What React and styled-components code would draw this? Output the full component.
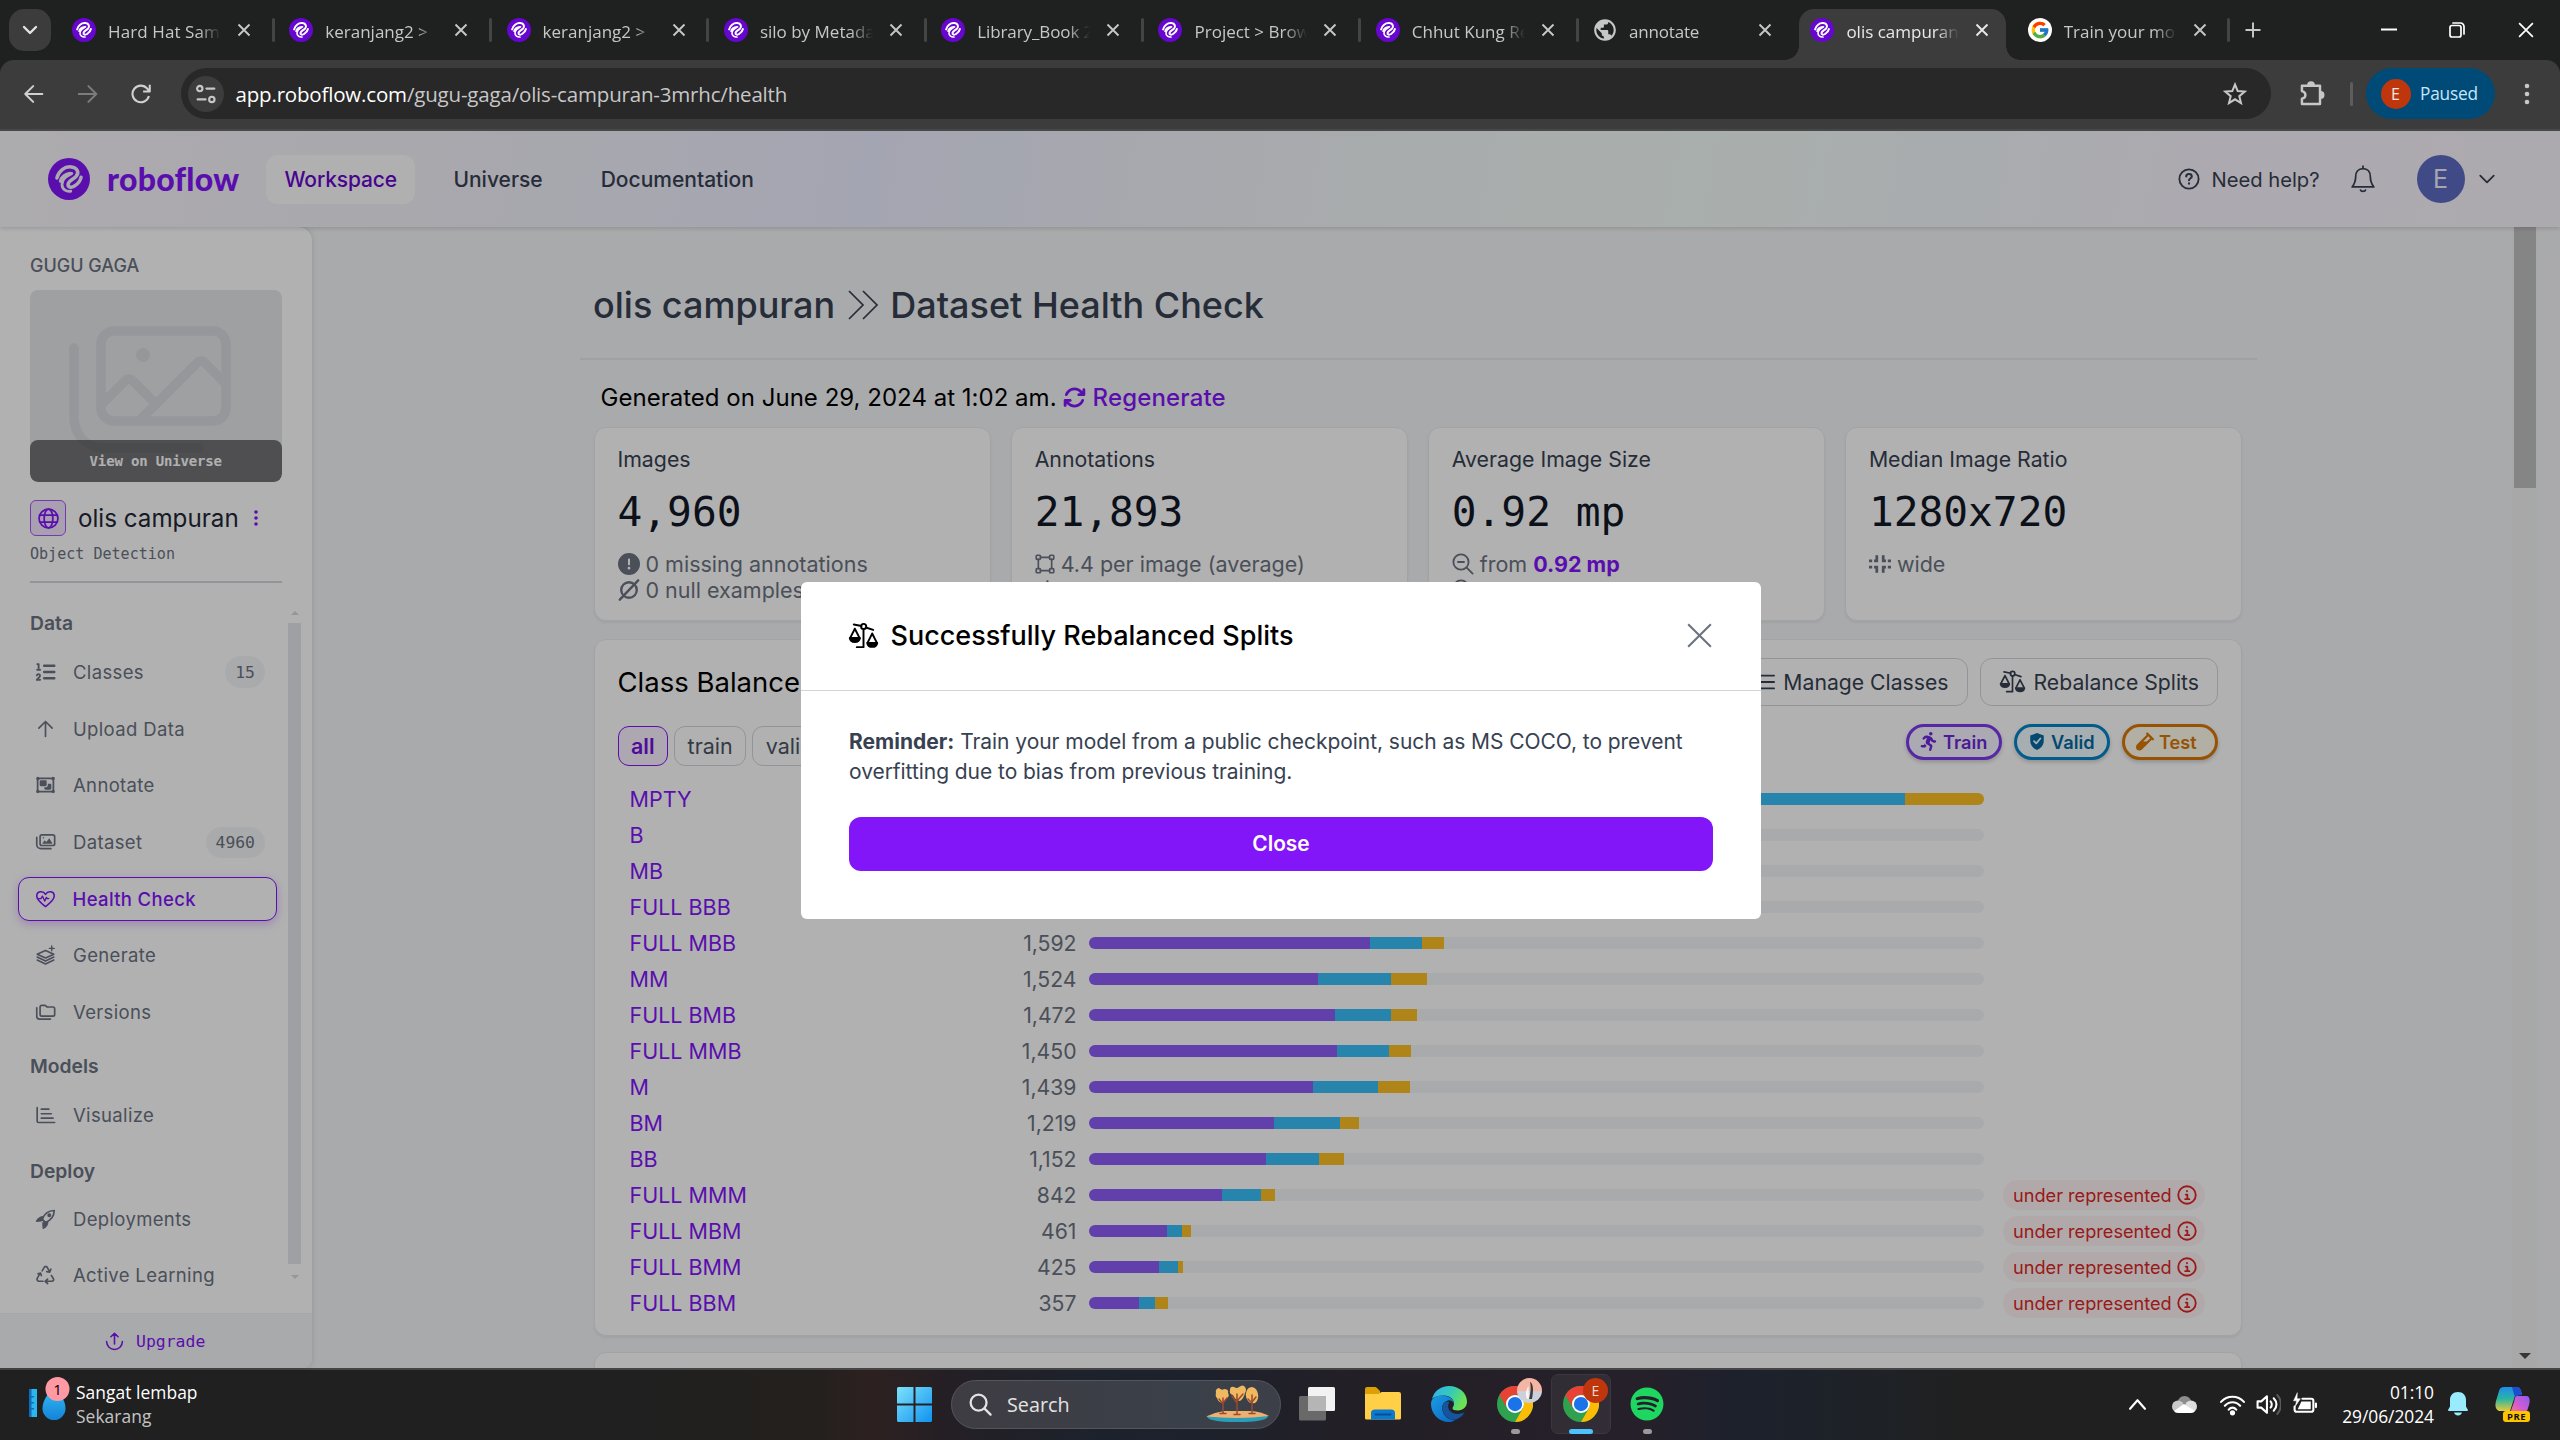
import React from 'react';
import styled, { createGlobalStyle, css } from 'styled-components';
import {
  FaListOl, FaArrowsRotate, FaCircleExclamation, FaPersonRunning, FaVial, FaRegObjectGroup, FaSpotify,
} from 'react-icons/fa6';
import { FcGoogle } from 'react-icons/fc';
import { MdPublic } from 'react-icons/md';

const Global = createGlobalStyle`
  * { box-sizing: border-box; }
  body { margin: 0; background: #1f2120; }
  svg { display: block; flex: none; }
`;

const inter = 'Inter, "Liberation Sans", sans-serif';
const segoe = '"Open Sans", "Noto Sans", sans-serif';
const mono = '"DejaVu Sans Mono", "Liberation Mono", monospace';
const purple = '#8315f9';

const Screen = styled.div`
  width: 2560px;
  height: 1440px;
  display: flex;
  flex-direction: column;
  overflow: hidden;
  white-space: nowrap;
  font-family: ${inter};
`;

/* ---------- icons ---------- */
const Svg = ({ s = 24, sw = 2, vb = 24, children, ...p }) => (
  <svg width={s} height={s} viewBox={`0 0 ${vb} ${vb}`} fill="none" stroke="currentColor" strokeWidth={sw}
    strokeLinecap="round" strokeLinejoin="round" {...p}>{children}</svg>
);
const Close = ({ s = 16, sw = 2 }) => <Svg s={s} vb={16} sw={sw} strokeLinecap="butt"><path d="M2.5 2.5l11 11M13.5 2.5l-11 11" /></Svg>;

const Mark = ({ s, color, line }) => (
  <svg width={s} height={s} viewBox="0 0 24 24" fill="none">
    <circle cx="12" cy="12" r="12" fill={color} />
    <path d="M5.1 11.4C6 7.6 9.5 4.7 13.3 5.1c3.6.4 4.8 3.4 2.6 5.6-1.6 1.6-4 2.2-4.4 4.2-.3 1.8 1.7 2.3 3.6 1.1 1.9-1.1 3.4-2.9 3.8-5"
      stroke={line} strokeWidth="2" strokeLinecap="round" />
    <path d="M12.6 8.7c-2.6.2-5.4 2.3-5.6 4.6M13.6 8.8c-3 1.6-5.6 3-5.6 6.4 0 2.6 2.4 4.2 5 3.8" stroke={line} strokeWidth="1.6" strokeLinecap="round" />
  </svg>
);

const Scale = ({ s = 30, sw = 1.5 }) => (
  <Svg s={s} sw={sw}>
    <path d="M4.5 3.5l6 1.2M13.8 5.8l5.7 1.9M12 7.2V21H6.8" />
    <circle cx="12.1" cy="5" r="2" />
    <path d="M5.3 6.8L1.6 14M5.3 6.8L9 14M18.7 10.5L15.2 17.5M18.7 10.5l3.6 7" />
    <path d="M1.4 14h7.8c-.3 2-1.9 3-3.9 3s-3.6-1-3.9-3zM14.9 17.800h7.700c-.3 2-1.900 3-3.850 3s-3.550-1-3.850-3z" fill="currentColor" />
  </Svg>
);
const Info = ({ s = 19 }) => <Svg s={s} sw={2.2}><circle cx="12" cy="12" r="10.500" /><path d="M12 7v.6M10.500 11.500H12.400V16.800M9.800 17h5" /></Svg>;
const Chevron = ({ s = 16, sw = 2, up }) => <Svg s={s} sw={sw} vb={16}><path d={up ? 'M1 12l7-8 7 8' : 'M2 5l6 6 6-6'} /></Svg>;
const Kebab = ({ s = 20, r = 2.2, far = 9 }) => <svg width={s} height={s} viewBox="0 0 24 24" fill="currentColor"><circle cx="12" cy={12 - far} r={r} /><circle cx="12" cy="12" r={r} /><circle cx="12" cy={12 + far} r={r} /></svg>;
const ListIcon = ({ s = 24 }) => <Svg s={s} sw={2}><path d="M8 5h15M8 12h15M8 19h15M2 5h1M2 12h1M2 19h1" /></Svg>;
const Globe = ({ s = 21, sw = 2 }) => <Svg s={s} sw={sw}><circle cx="12" cy="12" r="10.800" /><ellipse cx="12" cy="12" rx="5" ry="10.800" /><path d="M2 8h20M2 16h20" /></Svg>;
const Pictures = ({ s, sw = 2 }) => (
  <Svg s={s} sw={sw}>
    <rect x="5.500" y="3.500" width="17.500" height="12.700" rx="2.200" />
    <path d="M1.500 6.500v8.500a5 5 0 0 0 5 5h12" />
    <path d="M8 14l3-4 2 2 3.500-4.500L20.500 14z" fill="currentColor" stroke="none" />
    <circle cx="9.500" cy="7" r=".9" fill="currentColor" stroke="none" />
  </Svg>
);
const Folders = ({ s }) => <Svg s={s} sw={2}><path d="M5.500 6a2 2 0 0 1 2-2h4l2.500 2H21a2 2 0 0 1 2 2v7a2 2 0 0 1-2 2H7.500a2 2 0 0 1-2-2zM1.500 7v10a3.500 3.500 0 0 0 3.500 3.500h13" /></Svg>;
const Heart = ({ s }) => <Svg s={s} sw={1.9}><path d="M12 21C8 18 1.500 13.500 1.500 8.500 1.500 2.500 9 1.500 12 6.500c3-5 10.500-4 10.500 2 0 5-6.500 9.500-10.500 12.500z" /><path d="M2 11.500h4.500l1.800-3 2.700 6 2.200-4.500 1 1.500H16" strokeWidth="1.600" /></Svg>;
const Layers = ({ s }) => <Svg s={s} sw={1.9}><path d="M12 6.500L2 11l10 4.600L22 11zM2 14.500l10 4.800 10-4.800M2 18l10 4.800L22 18" /><path d="M19.500 1v6M16.500 4h6" strokeWidth="1.700" /></Svg>;
const BarIcon = ({ s }) => <Svg s={s} sw={2}><path d="M2 3v16.500a1.500 1.500 0 0 0 1.500 1.500H23M7 5h9M7 10.500h12M7 15.800h14" /></Svg>;
const Rocket = ({ s }) => <Svg s={s} sw={2}><path d="M8 12.500C10.500 5.500 15.500 2 22.500 1.800 22.300 9 18.500 13.500 12 16.200z" /><circle cx="16.500" cy="7.500" r="1.400" fill="currentColor" /><path d="M9 9.500c-4 0-5.500 2-7.500 5l5.500-.5zM14.500 15.500c0 4-2 5.500-5 7.500l-.5-6z" fill="currentColor" /><path d="M8 12.500l4 4" /></Svg>;
const Recycle = ({ s }) => <Svg s={s} sw={2}><path d="M8 7l3-5h2.500L17 8M13.500 8L17 8.500 18.500 5M5.500 10L2 16c-.6 1.500.5 3.500 2 3.500h5M3 10.500l3-.8 1 3M19 12.500l2.500 4c.8 1.500-.3 3-2 3H12M14.500 17l-3 2.600 3 2.600" /></Svg>;
const Up = ({ s }) => <Svg s={s} sw={2}><path d="M12 21V3M4 11l8-8 8 8" /></Svg>;
const Upgrade = ({ s }) => <Svg s={s} sw={2}><path d="M12 15V2M7.500 6L12 1.800 16.500 6M2 12c.2 6 4.500 10 10 10s9.800-4 10-10" /></Svg>;
const Shield = ({ s }) => <Svg s={s} sw={2.400}><path d="M12 .8l9 3.200v7c0 6-4 10.200-9 12.200C7 21.200 3 17 3 11V4z" fill="currentColor" stroke="none" /><path d="M8 11.500l3 3 5.500-6.500" stroke="#f0f9ff" /></Svg>;
const Zoom = ({ s }) => <Svg s={s} sw={2}><circle cx="9.800" cy="9.800" r="8.300" /><path d="M16 16l6.500 6.500M6.500 9.800h6.600" /></Svg>;
const Null = ({ s }) => <Svg s={s} sw={2.600}><circle cx="12" cy="12" r="8.500" /><path d="M2 22.500L22 1.500" /></Svg>;
const Slash = ({ s }) => <Svg s={s} sw={2.400}><path d="M6 22L15 1.500M1 8h21M2 16h19" /></Svg>;
const Vector = ({ s }) => <Svg s={s} sw={2}><path d="M6.500 4h11M6.500 20h11M4 6.500v11M20 6.500v11" /><rect x="1.500" y="1.500" width="5" height="5" rx="1" /><rect x="17.500" y="1.500" width="5" height="5" rx="1" /><rect x="1.500" y="17.500" width="5" height="5" rx="1" /><rect x="17.500" y="17.500" width="5" height="5" rx="1" /></Svg>;
const Compress = ({ s }) => <Svg s={s} sw={3} strokeLinejoin="miter" strokeLinecap="butt"><path d="M0 8.500h3.500M5.500 8.500h3V2.500M24 8.500h-3.500M18.500 8.500h-3V2.500M0 15.500h3.500M5.500 15.500h3v6M24 15.500h-3.500M18.500 15.500h-3v6" /></Svg>;

/* ---------- browser ---------- */
const TabStrip = styled.div`
  height: 60px;
  flex: none;
  display: flex;
  align-items: flex-start;
  padding: 9px 0 0 9px;
  background: #1f2120;
`;
const TabSearch = styled.div`
  width: 42px;
  height: 42px;
  margin-right: 6.500px;
  border-radius: 15px;
  background: #3c3c3c;
  color: #e3e3e3;
  display: grid;
  place-items: center;
`;
const Tab = styled.div`
  position: relative;
  width: 217.300px;
  height: 51px;
  flex: none;
  display: flex;
  align-items: center;
  padding: 0 0 9px 14.500px;
  color: ${(p) => (p.$active ? '#e8e8e8' : '#c7c7c7')};
  font: 400 17px ${segoe};
  &::after {
    content: '';
    width: 3px;
    height: 24px;
    margin-left: auto;
    border-radius: 2px;
    background: ${(p) => (p.$sep ? '#444' : 'transparent')};
  }
  ${(p) => p.$active && css`
    z-index: 0;
    &::before {
      content: '';
      position: absolute;
      z-index: -1;
      inset: 0 7px 0 3px;
      border-radius: 15px 15px 0 0;
      background: #3c3c3c;
    }
  `}
`;
const Flare = styled.i`
  position: absolute;
  bottom: 0;
  width: 14px;
  height: 14px;
  ${(p) => (p.$right ? 'right: -7px;' : 'left: -11px;')}
  background: radial-gradient(circle at ${(p) => (p.$right ? '100%' : '0')} 0, transparent 13.500px, #3c3c3c 14px);
`;
const TabTitle = styled.span`
  width: 113px;
  margin: 3px 15px 0 12px;
  overflow: hidden;
  letter-spacing: ${(p) => p.$ls || 0}px;
  mask-image: linear-gradient(90deg, #000 80%, transparent 100%);
`;
const GoogleDisc = styled.span`
  width: 24px;
  height: 24px;
  border-radius: 50%;
  background: #fff;
  display: grid;
  place-items: center;
`;
const SiteGlobe = styled(MdPublic)`
  width: 26px;
  height: 26px;
  margin: 0 -1px;
  color: #c4c7c5;
`;
const NewTab = styled.div`
  width: 46px;
  height: 42px;
  display: grid;
  place-items: center;
  color: #c7c7c7;
`;
const WindowButtons = styled.div`
  margin-left: auto;
  height: 42px;
  display: flex;
  align-items: center;
  gap: 51.500px;
  padding-right: 24px;
  color: #fff;
`;
const Toolbar = styled.div`
  height: 71px;
  flex: none;
  display: flex;
  align-items: center;
  padding: 0 18px 2px 24px;
  background: #3c3c3c;
  border-bottom: 2.500px solid #484a49;
  border-radius: 14px 14px 0 0;
  color: #c7c7c7;
`;
const NavIcon = styled.span`
  width: 20px;
  margin-right: 33.500px;
  color: ${(p) => (p.$dim ? '#7c7c7c' : '#d0d0d0')};
`;
const Omnibox = styled.div`
  width: 2090px;
  height: 51px;
  border-radius: 26px;
  background: #282828;
  display: flex;
  align-items: center;
  padding: 0 24px 0 7.500px;
  margin: 0 28px 0 -4px;
  color: #c7c7c7;
  font: 400 20.500px ${segoe};
  letter-spacing: -0.18px;
  b { font-weight: 400; color: #fff; }
  > svg { margin-left: auto; }
`;
const SiteInfo = styled.span`
  width: 36px;
  height: 36px;
  margin-right: 11.500px;
  border-radius: 50%;
  background: #3c3c3c;
  display: grid;
  place-items: center;
`;
const Paused = styled.div`
  width: 129px;
  height: 51px;
  margin-right: 20px;
  border-radius: 26px;
  background: #004a77;
  display: flex;
  align-items: center;
  gap: 9.500px;
  padding-left: 15px;
  color: #c2e7ff;
  font: 400 17.300px ${segoe};
  letter-spacing: -0.2px;
`;
const Initial = styled.span`
  width: 30px;
  height: 30px;
  border-radius: 50%;
  display: grid;
  place-items: center;
  background: #bf360c;
  color: #f4e6e0;
  font-size: 16px;
  letter-spacing: 0;
`;
const ToolDivider = styled.i`
  width: 3px;
  height: 24px;
  border-radius: 2px;
  background: #5c5e5e;
  margin: 0 13px 0 23px;
`;

/* ---------- page ---------- */
const Page = styled.div`
  position: relative;
  flex: 1;
  min-height: 0;
  display: flex;
  flex-direction: column;
  background: #f3f4f6;
`;
const Header = styled.header`
  position: relative;
  z-index: 1;
  height: 96px;
  flex: none;
  display: flex;
  align-items: center;
  padding: 0 64.500px 0 48px;
  background: linear-gradient(100deg, #f7f5f9 0%, #f2f1f8 17%, #ebedff 34%, #f1f3f8 48%, #f2fbf7 66%, #f3f6fb 77%, #f8f3fc 90%, #f8f4fb 100%);
  box-shadow: 0 2px 4px rgba(0, 0, 0, 0.13);
  color: #374151;
  font-size: 21px;
`;
const Wordmark = styled.span`
  width: 159px;
  margin: 0 0 1px 17px;
  color: ${purple};
  font: 900 32px Lato, sans-serif;
  letter-spacing: 0.25px;
`;
const NavLink = styled.a`
  height: 49px;
  display: flex;
  align-items: center;
  padding: 0 18.500px;
  margin-right: ${(p) => p.$mr || 0}px;
  border-radius: 12px;
  font-weight: 450;
  ${(p) => p.$active && css`background: #fdfdfd; color: #6706ce; letter-spacing: -0.15px;`}
`;
const HeaderRight = styled.div`
  margin-left: auto;
  display: flex;
  align-items: center;
  font-size: 20.200px;
  span { margin: 0 29px 0 11px; }
`;
const Avatar = styled.div`
  width: 48px;
  height: 48px;
  margin: 0 13px 0 40px;
  border-radius: 50%;
  background: #5c6bc0;
  color: #eceefa;
  display: grid;
  place-items: center;
  font-size: 25px;
`;
const Body = styled.div`
  flex: 1;
  min-height: 0;
  display: flex;
`;
const Sidebar = styled.aside`
  width: 311.500px;
  flex: none;
  display: flex;
  flex-direction: column;
  background: #fefefe;
  border-radius: 0 14px 9px 0;
  box-shadow: 0 0 6px rgba(0, 0, 0, 0.14);
  overflow: hidden;
  color: #6b7280;
`;
const SideTop = styled.div`
  height: 356px;
  margin: 0 30px;
  display: flex;
  flex-direction: column;
  border-bottom: 2px solid #d1d5db;
`;
const Org = styled.div`
  height: 63px;
  padding-top: 27px;
  font: 450 18px/24px ${inter};
`;
const Thumb = styled.div`
  height: 192px;
  border-radius: 8px;
  overflow: hidden;
  background: #e3e5e9;
  display: flex;
  flex-direction: column;
  justify-content: space-between;
  color: #d7d9dd;
`;
const ThumbArt = styled.div`
  height: 150px;
  padding: 33px 0 0 37px;
`;
const ThumbBar = styled.div`
  height: 42px;
  position: relative;
  border-radius: 8px;
  background: rgba(0, 0, 0, 0.5);
  color: #fcfcfc;
  font: 700 14px/42px ${mono};
  letter-spacing: -0.16px;
  text-align: center;
`;
const ProjectRow = styled.div`
  height: 36px;
  margin-top: 18px;
  display: flex;
  align-items: center;
  color: #1f2937;
  font-size: 24.200px;
  font-weight: 420;
  > svg { color: ${purple}; margin-left: 9px; }
`;
const ProjectBadge = styled.span`
  width: 36px;
  height: 36px;
  margin-right: 12px;
  border: 1.500px solid #a855f7;
  border-radius: 6px;
  background: #f1e6fd;
  color: ${purple};
  display: grid;
  place-items: center;
`;
const ProjectType = styled.div`
  margin-top: 6px;
  font: 400 15.060px/24px ${mono};
`;
const SideNav = styled.nav`
  flex: 1;
  display: flex;
  padding-top: 17px;
`;
const NavList = styled.div`
  width: 288px;
  padding-left: 18px;
`;
const SideHeading = styled.div`
  height: ${(p) => p.$h}px;
  padding: ${(p) => p.$pad}px 0 0 12px;
  font: 600 19.300px/24px ${inter};
`;
const SideItem = styled.div`
  width: 259px;
  height: 44px;
  margin-bottom: 12.600px;
  display: flex;
  align-items: center;
  padding: 0 12px 0 17px;
  border-radius: 11px;
  font-size: 18.500px;
  letter-spacing: 0.35px;
  > svg { width: 21px; margin-right: 17px; }
  ${(p) => p.$active && css`
    color: ${purple};
    font-weight: 500;
    padding-left: 15.500px;
    border: 1.500px solid ${purple};
    box-shadow: 0 3px 10px rgba(131, 21, 249, 0.25);
    background: #fefefe;
  `}
`;
const Count = styled.span`
  height: ${(p) => p.$h}px;
  margin-left: auto;
  padding: 0 10px;
  border-radius: 16px;
  background: #f3f4f6;
  display: flex;
  align-items: center;
  font: 400 16.400px ${mono};
  letter-spacing: 0;
`;
const SideScroll = styled.div`
  width: 13px;
  padding-top: 11px;
  display: flex;
  flex-direction: column;
  align-items: center;
  gap: 5px;
  i { width: 13px; height: 641px; margin: 3px 0 6px; background: #e3e5ea; }
`;
const Triangle = styled.b`
  border: ${(p) => p.$s}px solid transparent;
  border-${(p) => (p.$up ? 'bottom' : 'top')}: ${(p) => p.$s}px solid ${(p) => p.$c};
  border-${(p) => (p.$up ? 'top' : 'bottom')}-width: 0;
`;
const UpgradeBar = styled.div`
  height: 55px;
  display: flex;
  align-items: center;
  gap: 12px;
  padding-left: 105px;
  border-top: 1px solid #f0f0f2;
  background: #f3f4f6;
  color: ${purple};
  font: 400 16.450px ${mono};
`;
const Main = styled.main`
  flex: 1;
  min-width: 0;
  overflow: hidden;
  padding-left: 268.500px;
`;
const Content = styled.div`
  width: 1677px;
`;
const TitleRow = styled.div`
  height: 133px;
  padding: 24px 0 0 13px;
  border-bottom: 2px solid #e5e7eb;
  display: flex;
  align-items: center;
  font: 450 36px ${inter};
  color: #374151;
  svg { margin: 0 10px 0 11px; }
`;
const Inner = styled.div`
  margin: 0 15px 0 13.500px;
`;
const Generated = styled.div`
  height: 67px;
  padding: 8px 0 0 7px;
  display: flex;
  align-items: center;
  font-size: 24px;
  letter-spacing: 0.02px;
  color: #000;
`;
const Regenerate = styled.a`
  display: flex;
  align-items: center;
  gap: 7px;
  margin-left: 6px;
  color: ${purple};
  font-weight: 450;
  letter-spacing: 0.15px;
`;
const panel = css`
  background: #fefefe;
  border: 1.500px solid #e8eaed;
  border-radius: 12px;
  box-shadow: 0 2px 3px rgba(0, 0, 0, 0.06);
`;
const Cards = styled.div`
  display: grid;
  grid-template-columns: repeat(4, 1fr);
  gap: 20px;
`;
const Card = styled.section`
  ${panel}
  height: 194px;
  padding: 18px 23px 0;
  overflow: hidden;
`;
const CardLabel = styled.div`
  font: 400 21.300px/26px ${inter};
  color: #374151;
`;
const CardValue = styled.div`
  margin: 15px 0 13px;
  font: 400 41.200px/51px ${mono};
  color: #111827;
`;
const CardLine = styled.div`
  height: 26px;
  display: flex;
  align-items: center;
  gap: 6px;
  font-size: 21.500px;
  color: #6b7280;
  b { color: ${purple}; }
`;
const Panel = styled.section`
  ${panel}
  height: 697px;
  margin: 18px 0 0;
  padding: 17.500px 23px 0;
  & + & { margin-top: 16px; }
`;
const PanelHead = styled.div`
  height: 48px;
  display: flex;
  align-items: center;
  gap: 12px;
`;
const PanelTitle = styled.h2`
  flex: 1;
  margin: 0;
  font: 400 27.500px ${inter};
  color: #000;
`;
const OutlineButton = styled.button`
  height: 48px;
  display: flex;
  align-items: center;
  gap: 8px;
  padding: 0 18px;
  border: 1.500px solid #d1d5db;
  border-radius: 12px;
  background: #fefefe;
  color: #374151;
  font: 400 21.200px ${inter};
`;
const FilterRow = styled.div`
  height: 41px;
  margin: 18px 0 16px;
  display: flex;
  align-items: flex-start;
`;
const Filter = styled.span`
  height: 40px;
  margin: 2px 6px 0 0;
  padding: 0 12.500px;
  display: flex;
  align-items: center;
  border: 1.500px solid ${(p) => (p.$active ? purple : '#d1d5db')};
  border-radius: 11px;
  background: ${(p) => (p.$active ? '#f8f0fe' : '#fefefe')};
  color: ${(p) => (p.$active ? '#7411dc' : '#4b5563')};
  font: ${(p) => (p.$active ? 600 : 400)} 21.500px ${inter};
`;
const Legend = styled.div`
  flex: 1;
  display: flex;
  justify-content: flex-end;
  gap: 12px;
`;
const Split = styled.span`
  width: 96px;
  height: 36px;
  display: flex;
  align-items: center;
  gap: 5px;
  padding-left: 11px;
  border: 3px solid ${(p) => p.$c};
  border-radius: 18px;
  background: ${(p) => p.$bg};
  color: ${(p) => p.$t};
  box-shadow: 0 2px 4px rgba(0, 0, 0, 0.2);
  font: 600 18.200px ${inter};
  svg { width: 18px; height: 19px; }
`;
const ClassRow = styled.div`
  height: 36px;
  display: grid;
  grid-template-columns: 250px 197px 895px auto;
  align-items: center;
  padding-left: 12px;
`;
const ClassName = styled.a`
  color: ${purple};
  font-size: 21.500px;
`;
const ClassCount = styled.span`
  color: #6b7280;
  font-size: 21.200px;
  text-align: right;
`;
const Track = styled.div`
  height: 12px;
  margin: 0 -12px 0 12px;
  display: flex;
  overflow: hidden;
  border-radius: 6px;
  background: #f3f4f6;
`;
const Segment = styled.i`
  background: ${(p) => p.$c};
`;
const UnderTag = styled.span`
  width: 202px;
  height: 30px;
  margin-left: 31px;
  display: flex;
  align-items: center;
  gap: 5px;
  padding-left: 10.500px;
  border-radius: 15px;
  background: #fef2f2;
  color: #dc2626;
  font-size: 18.150px;
`;
const PageScroll = styled.div`
  width: 25px;
  margin-right: 23px;
  display: flex;
  flex-direction: column;
  justify-content: space-between;
  align-items: center;
  padding-bottom: 9px;
  background: #f1f1f1;
  i { width: 22px; height: 261px; background: #bfbfbf; }
`;
const Overlay = styled.div`
  position: absolute;
  z-index: 2;
  inset: 0;
  display: flex;
  align-items: center;
  justify-content: center;
  padding: 2px 0 0 2px;
  background: rgba(0, 0, 0, 0.3);
`;
const Modal = styled.div`
  width: 960px;
  height: 337px;
  border-radius: 6px;
  background: #fff;
  overflow: hidden;
`;
const ModalHead = styled.div`
  height: 109px;
  display: flex;
  align-items: center;
  gap: 11.500px;
  padding: 0 45.500px 1px 47px;
  border-bottom: 1.500px solid #d1d5db;
  font: 450 27px ${inter};
  color: #000;
  > :last-child { margin-left: auto; color: #6b7280; }
`;
const ModalText = styled.p`
  margin: 36px 48px 30px;
  font: 400 21px/30px ${inter};
  letter-spacing: -0.05px;
  color: #374151;
  b { letter-spacing: 0; }
`;
const CloseButton = styled.button`
  width: 864px;
  height: 54px;
  display: block;
  margin: 0 48px;
  padding: 0 0 1px;
  border: 0;
  border-radius: 12px;
  background: ${purple};
  color: #fff;
  font: 600 20.900px ${inter};
`;

/* ---------- taskbar ---------- */
const Taskbar = styled.footer`
  height: 72px;
  flex: none;
  display: flex;
  align-items: center;
  padding: 0 30px 2px 29px;
  border-top: 2px solid #454545;
  background: linear-gradient(90deg, #202020 0 25%, #24201d 32%, #2d2120 34%, #241f25 37%, #1c222c 43%, #1d212b 47%, #231f26 53%, #26202a 64%, #1c212c 68%, #1e2227 73%, #202020 77%);
  color: #fff;
  font: 400 17.400px ${segoe};
`;
const Weather = styled.div`
  width: 868px;
  height: 68px;
  display: flex;
  align-items: center;
`;
const TwoLines = styled.div`
  display: flex;
  flex-direction: column;
  line-height: 24px;
  letter-spacing: ${(p) => p.$ls || 0}px;
  text-align: ${(p) => (p.$right ? 'right' : 'left')};
  small { font-size: inherit; color: #c4c4c4; }
`;
const SearchPill = styled.div`
  width: 330px;
  height: 49px;
  margin: 0 3px 0 19px;
  display: flex;
  align-items: center;
  gap: 15px;
  padding: 0 11px 0 17px;
  border: 1.500px solid #54565e;
  border-radius: 25px;
  background: linear-gradient(90deg, #3f3c43, #3a4049 70%, #3c3f48);
  font-size: 19.800px;
  color: #e3e3e3;
  > :last-child { margin-left: auto; }
`;
const AppSlot = styled.div`
  position: relative;
  width: 60px;
  height: 60px;
  margin: 0 3px;
  display: flex;
  align-items: center;
  justify-content: center;
  border-radius: 7px;
  border: 1.500px solid ${(p) => (p.$active ? '#3a373f' : 'transparent')};
  background: ${(p) => (p.$active ? 'rgba(255,255,255,.06)' : 'transparent')};
  &::after {
    content: '';
    position: absolute;
    bottom: -0.500px;
    width: ${(p) => (p.$active ? 24 : 9)}px;
    height: 5px;
    border-radius: 3px;
    background: ${(p) => (p.$active ? '#4cc2ff' : p.$open ? '#9a9a9c' : 'transparent')};
  }
`;
const AppBadge = styled.span`
  position: absolute;
  top: 3px;
  right: 2px;
  width: 25px;
  height: 25px;
  border-radius: 50%;
  display: grid;
  place-items: center;
  background: ${(p) => p.$bg};
  color: #f1d9cf;
  font-size: 14px;
`;
const Tray = styled.div`
  margin-left: auto;
  display: flex;
  align-items: center;
`;
const TrayItem = styled.span`
  margin-right: ${(p) => p.$mr}px;
`;
const Copilot = styled.div`
  position: relative;
  width: 35px;
  height: 35px;
`;
const Pre = styled.span`
  position: absolute;
  right: 0;
  bottom: 0;
  width: 27px;
  height: 11px;
  border-radius: 3px;
  background: #ffc400;
  color: #111;
  font: 700 9.500px/11px ${segoe};
  letter-spacing: 0.4px;
  text-align: center;
`;

/* ---------- data ---------- */
const tabs = [
  { t: 'Hard Hat Sam', ls: 0.1 }, { t: 'keranjang2 > ' }, { t: 'keranjang2 > ' }, { t: 'silo by Metada' },
  { t: 'Library_Book 2', ls: -0.1 }, { t: 'Project > Brow' }, { t: 'Chhut Kung Re' }, { t: 'annotate', kind: 'globe', ls: -0.2 },
  { t: 'olis campuran', active: true }, { t: 'Train your mo', kind: 'google' },
];
const dataNav = [
  ['Classes', FaListOl, 15, 32], ['Upload Data', Up], ['Annotate', FaRegObjectGroup], ['Dataset', Pictures, 4960, 31],
  ['Health Check', Heart], ['Generate', Layers], ['Versions', Folders],
];
const BAR = 895;
const classes = [
  ['MPTY', null, 560, 256, 79], ['B', null, 0, 0, 0], ['MB', null, 0, 0, 0], ['FULL BBB', null, 0, 0, 0],
  ['FULL MBB', '1,592', 281, 52, 22], ['MM', '1,524', 229, 74, 36], ['FULL BMB', '1,472', 246, 56, 26],
  ['FULL MMB', '1,450', 248, 52, 22], ['M', '1,439', 224, 65, 32], ['BM', '1,219', 185, 66, 20], ['BB', '1,152', 177, 54, 25],
  ['FULL MMM', '842', 133, 40, 14, true], ['FULL MBM', '461', 78, 15, 10, true], ['FULL BMM', '425', 70, 19, 6, true],
  ['FULL BBM', '357', 50, 17, 13, true],
];

const pct = (v) => ({ width: `${(v / BAR) * 100}%` });

const NavRow = ({ label, Icon, count, h, active }) => (
  <SideItem $active={active}>
    <Icon s={20} size={20} />
    {label}
    {count ? <Count $h={h}>{count}</Count> : null}
  </SideItem>
);

const Chrome = () => (
  <svg width="36" height="36" viewBox="0 0 48 48">
    <circle cx="24" cy="24" r="24" fill="#2fa14f" />
    <path d="M3.200 12A24 24 0 0 1 44.800 12H24a12 12 0 0 0-10.400 18z" fill="#e94235" />
    <path d="M44.800 12A24 24 0 0 1 24 48l10.400-18A12 12 0 0 0 24 12z" fill="#fbbc05" />
    <circle cx="24" cy="24" r="12" fill="#fff" /><circle cx="24" cy="24" r="9.500" fill="#1a73e8" />
  </svg>
);
const Edge = () => (
  <svg width="36" height="36" viewBox="0 0 36 36">
    <defs>
      <linearGradient id="e1" x1="0" y1="0" x2="1" y2=".4"><stop offset="0" stopColor="#2fb4f2" /><stop offset=".55" stopColor="#35c9b8" /><stop offset="1" stopColor="#6be354" /></linearGradient>
      <linearGradient id="e2" x1="0" y1="0" x2="1" y2="1"><stop offset="0" stopColor="#1b9de2" /><stop offset="1" stopColor="#0a63c4" /></linearGradient>
    </defs>
    <path d="M1 13C3 5 10 0 18 0c10 0 18 7 18 15.500C36 21 32 24.500 27 24.500c-3.500 0-5.500-1-5.500-2.300 0-1.200 1.500-1.800 1.500-4.700 0-4-4-8-10-8C7 9.500 3 11 1 13z" fill="url(#e1)" />
    <path d="M0 18C0 13 4 9.500 11 9.500c7 0 12 4 12 8 0 0-2-4-6-3-5 1.500-7 6-5 11.500 2 5.500 7 8.500 13 7.500-3 2-5 2.500-7 2.500C8 36 0 28 0 18z" fill="url(#e2)" />
    <path d="M11.500 20c-1 8 6 15 14 13.300 3.500-1.300 6.500-4 8-7-5 2.500-11 2.500-14.500-1.300-2.500-2.700-2.300-6-.5-9.500-3.500-.5-6.300 1.500-7 4.500z" fill="#15559f" />
  </svg>
);

export default function App() {
  return (
    <Screen>
      <Global />
      <TabStrip>
        <TabSearch><Chevron s={16} sw={2.400} /></TabSearch>
        {tabs.map((tab, i) => (
          <Tab key={i} $active={tab.active} $sep={i < 7 || i === 9}>
            {tab.active && <><Flare /><Flare $right /></>}
            {tab.kind === 'google' ? <GoogleDisc><FcGoogle size={20} /></GoogleDisc>
              : tab.kind === 'globe' ? <SiteGlobe />
                : <Mark s={24} color="#6706ce" line="#fff" />}
            <TabTitle $ls={tab.ls}>{tab.t}</TabTitle>
            <Close s={16} sw={1.900} />
          </Tab>
        ))}
        <NewTab><Svg s={18} sw={2.600} strokeLinecap="butt"><path d="M12 2v20M2 12h20" /></Svg></NewTab>
        <WindowButtons>
          <Svg s={16} sw={2} vb={16} strokeLinecap="butt"><path d="M0 7.500h16" /></Svg>
          <Svg s={16} sw={1.700} vb={16}><rect x="1" y="3.500" width="11" height="11.500" rx="2" /><path d="M4 1h7.500A3.500 3.500 0 0 1 15 4.500V12" /></Svg>
          <Close s={20} sw={1.400} />
        </WindowButtons>
      </TabStrip>
      <Toolbar>
        <NavIcon><Svg s={20} sw={2.400}><path d="M22 12H1.500M11 2.500L1.500 12l9.500 9.500" /></Svg></NavIcon>
        <NavIcon $dim><Svg s={20} sw={2.400}><path d="M1 12h21M12.500 2.500L22 12l-9.500 9.500" /></Svg></NavIcon>
        <NavIcon><Svg s={20} sw={2.500} strokeLinecap="butt"><path d="M21.500 14.500A10 10 0 1 1 19.500 5.500l2 2.500M22.500 1v8h-8" /></Svg></NavIcon>
        <Omnibox>
          <SiteInfo><Svg s={20} sw={2.600}><circle cx="4.500" cy="5.500" r="3.200" /><path d="M12.500 5.500H22M2 18.500h9.500" /><circle cx="19" cy="18.500" r="3.200" /></Svg></SiteInfo>
          <b>app.roboflow.com</b>/gugu-gaga/olis-campuran-3mrhc/health
          <Svg s={24} sw={2} strokeLinejoin="miter"><path d="M12 2.500l2.700 6.600 7 .5-5.400 4.600 1.700 6.900-6-3.800-6 3.800 1.700-6.900-5.400-4.600 7-.5z" /></Svg>
        </Omnibox>
        <Svg s={28} sw={2.100}><path d="M2.500 5h15.500v15.500H2.500V16c4-1 4-5.500 0-6.500z" /><path d="M8 4.500a2.300 2.300 0 0 1 4.600 0zM18.500 10.500a2.300 2.300 0 0 1 0 4.600z" fill="currentColor" /></Svg>
        <ToolDivider />
        <Paused><Initial>E</Initial>Paused</Paused>
        <Kebab s={24} r={2.300} far={8} />
      </Toolbar>

      <Page>
        <Header>
          <Mark s={42} color={purple} line="#f4f3f9" />
          <Wordmark>roboflow</Wordmark>
          <NavLink $active $mr={19.500}>Workspace</NavLink>
          <NavLink $mr={21}>Universe</NavLink>
          <NavLink>Documentation</NavLink>
          <HeaderRight>
            <Svg s={22} sw={2}><circle cx="12" cy="12" r="10.500" /><path d="M9 9.300c0-1.600 1.300-2.700 3-2.700s3 1 3 2.600c0 2-3 2-3 4.200M12 16.800v.4" strokeWidth="2.300" /></Svg>
            <span>Need help?</span>
            <Svg s={28} sw={1.500}><path d="M12 1v2M12 3c-4 0-6.300 3-6.300 7 0 4.500-1 6.200-3 8.800h18.600c-2-2.600-3-4.300-3-8.800 0-4-2.300-7-6.300-7zM9.800 21.500c.5 1.500 3.900 1.500 4.400 0" /></Svg>
            <Avatar>E</Avatar>
            <Chevron s={18} sw={1.600} />
          </HeaderRight>
        </Header>
        <Body>
          <Sidebar>
            <SideTop>
              <Org>GUGU GAGA</Org>
              <Thumb>
                <ThumbArt>
                  <svg width="166" height="130" viewBox="0 0 166 130" fill="none" stroke="currentColor" strokeWidth="9.500" strokeLinecap="round" strokeLinejoin="round">
                    <rect x="34" y="8" width="125" height="90" rx="13" />
                    <path d="M7 25v69c0 17 12 31 29 31h96" />
                    <path d="M36 80l22-22q4-4 8 0l22 22M74 96l56-56q4-4 8 0l21 21" strokeLinecap="butt" />
                    <circle cx="76" cy="32" r="7" fill="currentColor" stroke="none" />
                  </svg>
                </ThumbArt>
                <ThumbBar>View on Universe</ThumbBar>
              </Thumb>
              <ProjectRow><ProjectBadge><Globe /></ProjectBadge>olis campuran<Kebab s={16} r={2.700} /></ProjectRow>
              <ProjectType>Object Detection</ProjectType>
            </SideTop>
            <SideNav>
              <NavList>
                <SideHeading $h={50.300} $pad={10.500}>Data</SideHeading>
                {dataNav.map(([l, I, c, h]) => <NavRow key={l} label={l} Icon={I} count={c} h={h} active={l === 'Health Check'} />)}
                <SideHeading $h={46.500} $pad={7.500}>Models</SideHeading>
                <NavRow label="Visualize" Icon={BarIcon} />
                <SideHeading $h={47.200} $pad={9.500}>Deploy</SideHeading>
                <NavRow label="Deployments" Icon={Rocket} />
                <NavRow label="Active Learning" Icon={Recycle} />
              </NavList>
              <SideScroll><Triangle $up $s={4} $c="#d5d7db" /><i /><Triangle $s={4} $c="#d5d7db" /></SideScroll>
            </SideNav>
            <UpgradeBar><Upgrade s={19} />Upgrade</UpgradeBar>
          </Sidebar>

          <Main>
            <Content>
              <TitleRow>
                olis campuran
                <svg width="34" height="32" viewBox="0 0 34 32" fill="none" stroke="currentColor" strokeWidth="1.700"><path d="M3 2l14 14L3 30M17 2l14 14-14 14" /></svg>
                Dataset Health Check
              </TitleRow>
              <Inner>
                <Generated>
                  Generated on June 29, 2024 at 1:02 am.
                  <Regenerate><FaArrowsRotate size={23} />Regenerate</Regenerate>
                </Generated>
                <Cards>
                  <Card>
                    <CardLabel>Images</CardLabel><CardValue>4,960</CardValue>
                    <CardLine><FaCircleExclamation size={22} />0 missing annotations</CardLine>
                    <CardLine><Null s={22} />0 null examples</CardLine>
                  </Card>
                  <Card>
                    <CardLabel>Annotations</CardLabel><CardValue>21,893</CardValue>
                    <CardLine><Vector s={20} />4.4 per image (average)</CardLine>
                    <CardLine><Slash s={20} />across 15 classes</CardLine>
                  </Card>
                  <Card>
                    <CardLabel>Average Image Size</CardLabel><CardValue>0.92 mp</CardValue>
                    <CardLine><Zoom s={22} /><span>from <b>0.92 mp</b></span></CardLine>
                    <CardLine><Zoom s={22} /><span>to <b>21.58 mp</b></span></CardLine>
                  </Card>
                  <Card>
                    <CardLabel>Median Image Ratio</CardLabel><CardValue>1280x720</CardValue>
                    <CardLine><Compress s={22} />wide</CardLine>
                  </Card>
                </Cards>
                <Panel>
                  <PanelHead>
                    <PanelTitle>Class Balance</PanelTitle>
                    <OutlineButton><ListIcon s={22} />Manage Classes</OutlineButton>
                    <OutlineButton><Scale s={27} />Rebalance Splits</OutlineButton>
                  </PanelHead>
                  <FilterRow>
                    <Filter $active>all</Filter><Filter>train</Filter><Filter>valid</Filter>
                    <Legend>
                      <Split $c="#7c3aed" $bg="#f5f3ff" $t="#6d28d9"><FaPersonRunning />Train</Split>
                      <Split $c="#0284c7" $bg="#f0f9ff" $t="#0369a1"><Shield />Valid</Split>
                      <Split $c="#d97706" $bg="#fffbeb" $t="#d97706"><FaVial />Test</Split>
                    </Legend>
                  </FilterRow>
                  {classes.map(([name, n, a, b, c, under]) => (
                    <ClassRow key={name}>
                      <ClassName>{name}</ClassName>
                      <ClassCount>{n}</ClassCount>
                      <Track>
                        <Segment $c="#8b5cf6" style={pct(a)} /><Segment $c="#38bdf8" style={pct(b)} /><Segment $c="#fbbf24" style={pct(c)} />
                      </Track>
                      {under ? <UnderTag>under represented <Info s={20} /></UnderTag> : null}
                    </ClassRow>
                  ))}
                </Panel>
                <Panel />
              </Inner>
            </Content>
          </Main>
          <PageScroll><i /><Triangle $s={6} $c="#505050" /></PageScroll>
        </Body>
        <Overlay>
          <Modal>
            <ModalHead><Scale s={31} />Successfully Rebalanced Splits<Close s={33} sw={1} /></ModalHead>
            <ModalText><b>Reminder:</b> Train your model from a public checkpoint, such as MS COCO, to prevent<br />overfitting due to bias from previous training.</ModalText>
            <CloseButton>Close</CloseButton>
          </Modal>
        </Overlay>
      </Page>

      <Taskbar>
        <Weather>
          <svg width="47" height="60" viewBox="0 0 47 60">
            <defs><linearGradient id="w" x1="0" y1="0" x2="0" y2="1"><stop offset="0" stopColor="#35c3f5" /><stop offset="1" stopColor="#1482d8" /></linearGradient></defs>
            <rect y="15" width="8" height="28" fill="#2cb6ee" /><path d="M0 15h2.500v28H0zM2 22h3v1.500H2zM2 28h3v1.500H2zM2 34h3v1.500H2z" fill="#0f6cbd" />
            <path d="M25 12c7 9 11.500 15 11.500 22.500a11.500 11.500 0 0 1-23 0C13.500 27 18 21 25 12z" fill="url(#w)" />
            <circle cx="28.500" cy="15" r="12" fill="#ff99a4" />
            <text x="28.500" y="20.500" fontSize="15" fontFamily="Open Sans, sans-serif" textAnchor="middle" fill="#000">1</text>
          </svg>
          <TwoLines $ls={0.05}><span>Sangat lembap</span><small>Sekarang</small></TwoLines>
        </Weather>
        <svg width="35" height="35" viewBox="0 0 35 35">
          <defs><linearGradient id="win" x1="0" y1="0" x2="1" y2="1"><stop offset="0" stopColor="#7ee1fb" /><stop offset="1" stopColor="#0e93f0" /></linearGradient></defs>
          <path d="M0 1.500Q0 0 1.500 0H16.500V16.500H0zM18.500 0h15Q35 0 35 1.500V16.500H18.500zM0 18.500H16.500V35H1.500Q0 35 0 33.500zM18.500 18.500H35v15q0 1.500-1.500 1.500h-15z" fill="url(#win)" />
        </svg>
        <SearchPill>
          <Svg s={23} sw={2.400}><circle cx="10" cy="10" r="8.300" /><path d="M16.500 16.500l6 6" /></Svg>
          Search
          <svg width="63" height="38" viewBox="0 0 63 38">
            <path d="M1 31h61q-1 6-31 6T1 31z" fill="#2a9db8" /><path d="M0 31.500q8-4 18-5.500h28q10 1 17 5-30 3.500-63 .5z" fill="#eeb070" />
            <g fill="#f0b860"><path d="M10 8q-1-4 3-5 3 3 5 1 5 0 4 4 2 3-1 5-2 4-5 5-4-1-5-5-2-2-1-5zM24 5q0-4 4-3 3 2 5 0 4-3 6 0 2 3 0 6-1 5-5 8-5-1-7-6-4-1-3-5zM40 8q1-6 6-6 5 1 6 7 1 6-3 9-5 1-7-2-3-4-2-8z" /></g>
            <g stroke="#9c4a2e" strokeWidth="1.500" fill="none" strokeLinecap="round"><path d="M17 28V13M17 19l-4-5M17 18l4-5M31 29V9M31 18l-5-7M31 16l6-7M46 28V10M46 18l-4-4M46 17l4-5M14 28.500h6M28 29.500h6M43 28.500h6" /></g>
          </svg>
        </SearchPill>
        <AppSlot>
          <svg width="36" height="34" viewBox="0 0 36 34"><rect y="9" width="27" height="24.500" rx="1.500" fill="#696969" /><rect x="9" width="27" height="24" rx="1.500" fill="#f2f2f2" /><path d="M9 9h18v15H9z" fill="#b5b5b5" /></svg>
        </AppSlot>
        <AppSlot>
          <svg width="36" height="34" viewBox="0 0 36 34"><path d="M0 2q0-2 2-2h8q1 0 2 1l3 3v8H0z" fill="#dc9f04" /><path d="M0 7h13q1 0 2-1t2-1h17q2 0 2 2v24q0 1.500-1.500 1.500H1.500Q0 32.500 0 31z" fill="#ffcf48" /><path d="M6 32.500V26q0-3.500 4-3.500h16q4 0 4 3.500v6.500z" fill="#0c79d0" /><path d="M10.500 27.500h15" stroke="#0a4f8f" strokeWidth="2" strokeLinecap="round" /></svg>
        </AppSlot>
        <AppSlot><Edge /></AppSlot>
        <AppSlot $open><Chrome /><AppBadge $bg="linear-gradient(#f5b5a5 50%, #ccd0da 55%)"><svg width="10" height="17" viewBox="0 0 10 17"><path d="M5 0c3 1 4 7 2 17H4C6 10 6 4 5 0z" fill="#3c3c3c" /><path d="M3.500 4C1 8 0 13 2 17h2z" fill="#f5f5f5" /></svg></AppBadge></AppSlot>
        <AppSlot $active><Chrome /><AppBadge $bg="#bf360c">E</AppBadge></AppSlot>
        <AppSlot $open><FaSpotify size={34} color="#1ed760" /></AppSlot>
        <Tray>
          <TrayItem $mr={26}><Chevron up s={17} sw={2} /></TrayItem>
          <TrayItem $mr={23}>
            <svg width="25" height="17" viewBox="0 0 25 17"><circle cx="12.500" cy="7" r="7" fill="#8c8c8c" /><circle cx="6" cy="10.500" r="6" fill="#c9c9c9" /><circle cx="19" cy="10.500" r="6" fill="#dedede" /><path d="M2 15l10-7 11 7q-1 2-4 2H6q-3 0-4-2z" fill="#fff" /></svg>
          </TrayItem>
          <TrayItem $mr={11}><Svg s={25} sw={2}><path d="M1 9.500c6-6.500 16-6.500 22 0M4.700 13.200c4-4.500 10.600-4.500 14.600 0M8.400 16.900c2-2.500 5.200-2.500 7.200 0" /><circle cx="12" cy="20" r="1.500" fill="currentColor" /></Svg></TrayItem>
          <TrayItem $mr={11}><Svg s={25} sw={2}><path d="M1.500 9v6H5l5.500 5V4L5 9zM14 9c1.500 1.500 1.500 4.500 0 6M17 6c3.500 3.500 3.500 8.500 0 12" /><path d="M20.500 3c4.500 5 4.500 13 0 18" stroke="#5a5a5a" /></Svg></TrayItem>
          <TrayItem $mr={25}><Svg s={25} sw={2}><path d="M6 19h12.500a2 2 0 0 0 2-2V8.500a2 2 0 0 0-2-2H10M2.500 14v3a2 2 0 0 0 2 2h2M23 11v3.500" /><path d="M9 9h9v7.500H5.500z" fill="currentColor" stroke="none" /><path d="M5 1L1.500 8.500h3L3 14l5-7.500H5z" fill="currentColor" strokeWidth=".5" /></Svg></TrayItem>
          <TrayItem $mr={14}><TwoLines $right $ls={-0.05}><span>01:10</span><span>29/06/2024</span></TwoLines></TrayItem>
          <TrayItem $mr={27}>
            <svg width="20" height="24" viewBox="0 0 20 24" fill="#99ebff"><path d="M10 0c5 0 8 3.500 8 8v6.500l2 3.500q0 1-1 1H1q-1 0-1-1l2-3.500V8c0-4.500 3-8 8-8zM6 20.500h8Q13 23.500 10 23.500T6 20.500z" /></svg>
          </TrayItem>
          <Copilot>
            <svg width="35" height="30" viewBox="0 0 35 30">
              <defs>
                <linearGradient id="c1" x1="0" y1="0" x2="0" y2="1"><stop offset="0" stopColor="#1f8cf0" /><stop offset=".5" stopColor="#2bb5a0" /><stop offset="1" stopColor="#e8c93c" /></linearGradient>
                <linearGradient id="c2" x1="1" y1="0" x2="0" y2="1"><stop offset="0" stopColor="#8b5cf0" /><stop offset=".5" stopColor="#d45bd0" /><stop offset="1" stopColor="#f88a5c" /></linearGradient>
              </defs>
              <path d="M9 0h14q3 1 4 8-7-1-8 4l-4 12H4q-5-2-3-10L4 4q1-4 5-4z" fill="url(#c1)" /><path d="M17 0h6q3 1 4 8-5 0-7 3z" fill="#1b4fd0" />
              <path d="M22 9h10q4 1 2 9l-2 6q-2 5-6 5H14l5-14q1-6 3-6z" fill="url(#c2)" />
            </svg>
            <Pre>PRE</Pre>
          </Copilot>
        </Tray>
      </Taskbar>
    </Screen>
  );
}
